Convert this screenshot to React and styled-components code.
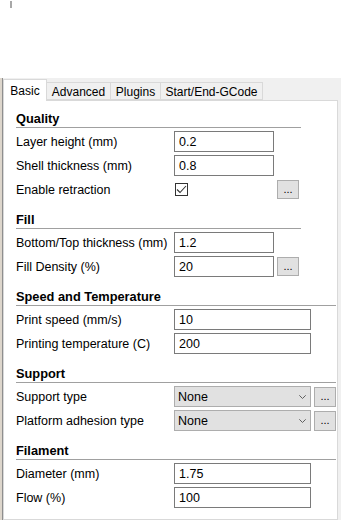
import React from "react";
import styled, { createGlobalStyle } from "styled-components";

const Global = createGlobalStyle`
  html, body { margin: 0; padding: 0; background: #ffffff; }
  body {
    font-family: "Liberation Sans", Arial, sans-serif;
    font-size: 12.5px;
    color: #000;
  }
  * { box-sizing: border-box; }
`;

const Page = styled.div`
  width: 341px;
  height: 520px;
  overflow: hidden;
  display: flex;
  flex-direction: column;
  background: #fff;
`;

const TopStrip = styled.div`
  height: 78px;
  padding: 1px 0 0 10px;
  flex: none;
`;

const Caret = styled.div`
  width: 2px;
  height: 7px;
  background: #a8a8a8;
`;

const Frame = styled.div`
  flex: 1;
  display: flex;
  background: #f0f0f0;
  border-left: 2px solid #ddd6cc;
  min-height: 0;
`;

const Window = styled.div`
  flex: 1;
  display: flex;
  border-left: 1px solid #8e8e8e;
  padding-right: 3px;
  min-height: 0;
`;

const Notebook = styled.div`
  flex: 1;
  display: flex;
  flex-direction: column;
  min-height: 0;
`;

const TabBar = styled.div`
  height: 22px;
  display: flex;
  align-items: flex-end;
  flex: none;
`;

const Tab = styled.div`
  width: ${(p) => p.$w}px;
  height: ${(p) => (p.$active ? 22 : 18)}px;
  margin-bottom: ${(p) => (p.$active ? -1 : 0)}px;
  margin-left: ${(p) => (p.$first ? 0 : -1)}px;
  position: relative;
  z-index: ${(p) => (p.$active ? 2 : 1)};
  display: flex;
  align-items: center;
  justify-content: center;
  padding-top: ${(p) => (p.$active ? 0 : 1)}px;
  background: ${(p) => (p.$active ? "#ffffff" : "#f0f0f0")};
  border: 1px solid #d9d9d9;
  border-bottom: ${(p) => (p.$active ? "none" : "1px solid #d9d9d9")};
  font-size: 12px;
  white-space: nowrap;
`;

const Panel = styled.div`
  flex: 1;
  background: #fff;
  border: 1px solid #d9d9d9;
  padding: 0 0 0 12px;
  display: flex;
  flex-direction: column;
  min-height: 0;
`;

const Section = styled.section`
  display: flex;
  flex-direction: column;
`;

const Header = styled.div`
  height: 26px;
  display: flex;
  align-items: flex-end;
  padding-bottom: 1px;
  font-weight: 700;
  font-size: 12.8px;
  line-height: 14px;
`;

const Rule = styled.div`
  height: 1px;
  width: ${(p) => p.$w}px;
  background: #a0a0a0;
`;

const Rows = styled.div`
  display: flex;
  flex-direction: column;
  gap: 3px;
  margin: 3px 0 2px;
`;

const Row = styled.div`
  display: grid;
  grid-template-columns: 155px auto auto;
  column-gap: 3px;
  align-items: center;
  justify-content: start;
  height: 21px;
`;

const Label = styled.span`
  white-space: nowrap;
  line-height: 14px;
`;

const Field = styled.div`
  width: ${(p) => p.$w}px;
  height: 21px;
  border: 1px solid #7a7a7a;
  background: #fff;
  padding: 0 4px;
  display: flex;
  align-items: center;
  line-height: 14px;
`;

const Select = styled.div`
  width: 137px;
  height: 21px;
  border: 1px solid #adadad;
  background: #e1e1e1;
  padding: 0 4px 0 3px;
  display: flex;
  align-items: center;
  justify-content: space-between;
  line-height: 14px;
`;

const DotsButton = styled.div`
  width: 22px;
  height: ${(p) => p.$h || 19}px;
  border: 1px solid #adadad;
  background: #e1e1e1;
  display: flex;
  align-items: center;
  justify-content: center;
  font-size: 11px;
  line-height: 10px;
  padding-bottom: 1px;
`;

const CheckCell = styled.div`
  width: 100px;
  display: flex;
  align-items: center;
  padding-left: 1px;
`;

const CheckBox = styled.div`
  width: 13px;
  height: 13px;
  border: 1px solid #333;
  background: #fff;
  display: flex;
  align-items: center;
  justify-content: center;
`;

const Chevron = () => (
  <svg width="7" height="4" viewBox="0 0 7 4">
    <path d="M0.3 0.3 L3.5 3.5 L6.7 0.3" fill="none" stroke="#606060" strokeWidth="1" />
  </svg>
);

const Check = () => (
  <svg width="11" height="11" viewBox="0 0 11 11">
    <path d="M1 5.5 L4 8.5 L10 2" fill="none" stroke="#333" strokeWidth="1.1" />
  </svg>
);

const NARROW = 285;
const WIDE = 320;

const TextRow = ({ label, value, w = 100, dots }) => (
  <Row>
    <Label>{label}</Label>
    <Field $w={w}>{value}</Field>
    {dots ? <DotsButton>...</DotsButton> : <span />}
  </Row>
);

const SelectRow = ({ label, value }) => (
  <Row>
    <Label>{label}</Label>
    <Select>
      <span>{value}</span>
      <Chevron />
    </Select>
    <DotsButton $h={20}>...</DotsButton>
  </Row>
);

export default function App() {
  return (
    <>
      <Global />
      <Page>
        <TopStrip>
          <Caret />
        </TopStrip>
        <Frame>
          <Window>
            <Notebook>
              <TabBar>
                <Tab $w={44} $first $active>Basic</Tab>
                <Tab $w={65}>Advanced</Tab>
                <Tab $w={51}>Plugins</Tab>
                <Tab $w={103}>Start/End-GCode</Tab>
              </TabBar>
              <Panel>
                <Section>
                  <Header>Quality</Header>
                  <Rule $w={NARROW} />
                  <Rows>
                    <TextRow label="Layer height (mm)" value="0.2" />
                    <TextRow label="Shell thickness (mm)" value="0.8" />
                    <Row>
                      <Label>Enable retraction</Label>
                      <CheckCell>
                        <CheckBox>
                          <Check />
                        </CheckBox>
                      </CheckCell>
                      <DotsButton>...</DotsButton>
                    </Row>
                  </Rows>
                </Section>
                <Section>
                  <Header>Fill</Header>
                  <Rule $w={NARROW} />
                  <Rows>
                    <TextRow label="Bottom/Top thickness (mm)" value="1.2" />
                    <TextRow label="Fill Density (%)" value="20" dots />
                  </Rows>
                </Section>
                <Section>
                  <Header>Speed and Temperature</Header>
                  <Rule $w={WIDE} />
                  <Rows>
                    <TextRow label="Print speed (mm/s)" value="10" w={137} />
                    <TextRow label="Printing temperature (C)" value="200" w={137} />
                  </Rows>
                </Section>
                <Section>
                  <Header>Support</Header>
                  <Rule $w={WIDE} />
                  <Rows>
                    <SelectRow label="Support type" value="None" />
                    <SelectRow label="Platform adhesion type" value="None" />
                  </Rows>
                </Section>
                <Section>
                  <Header>Filament</Header>
                  <Rule $w={WIDE} />
                  <Rows>
                    <TextRow label="Diameter (mm)" value="1.75" w={137} />
                    <TextRow label="Flow (%)" value="100" w={137} />
                  </Rows>
                </Section>
              </Panel>
            </Notebook>
          </Window>
        </Frame>
      </Page>
    </>
  );
}
